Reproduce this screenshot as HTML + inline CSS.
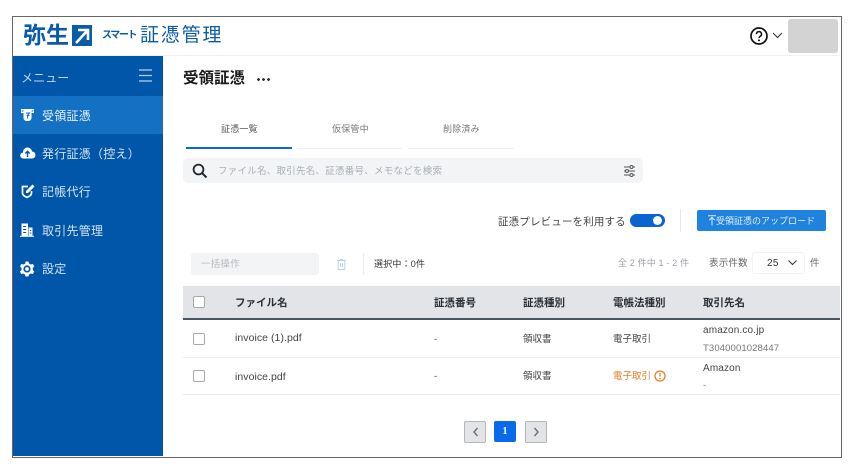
<!DOCTYPE html>
<html lang="ja"><head><meta charset="utf-8"><style>
html,body{margin:0;padding:0;background:#fff}
body{width:850px;height:466px;position:relative;overflow:hidden;font-family:"Liberation Sans","Noto Sans CJK JP",sans-serif;color:#333}
.a,.t{position:absolute}
.t{white-space:nowrap;line-height:16px;height:16px}
.n{color:#d3e2f2;font-size:12px;left:42px;letter-spacing:.25px}
.h{font-size:10.5px;font-weight:700;color:#2a2f36;top:295px}
.c{font-size:9.5px;color:#444}
.l{font-size:10px;color:#444;letter-spacing:.15px}
.cb{position:absolute;left:193px;width:10px;height:10px;border:1px solid #a8a8a8;border-radius:2px;background:#fff}
.pg{position:absolute;top:421px;width:20px;height:20px;border:1px solid #b4b8bd;border-radius:2px;background:#e2e4e7}
svg{position:absolute;overflow:visible}
</style></head><body>
<div class="a" style="left:12px;top:16px;width:828px;height:440px;border:1px solid #666"></div>
<div class="a" style="left:13px;top:17px;width:827px;height:39px;border-bottom:1px solid #f1f1f1;box-sizing:border-box"></div>
<div class="t" style="left:23px;top:22px;font-size:23px;line-height:26px;height:26px;font-weight:700;color:#0a5ba8">弥生</div>
<div class="a" style="left:72px;top:25px;width:20px;height:21px;background:#0a5ba8"></div>
<svg style="left:72px;top:25px" width="20" height="21"><path d="M6 5h10v10M15 6L4 18" fill="none" stroke="#fff" stroke-width="2.6"/></svg>
<div class="t" style="left:102px;top:28px;font-size:10px;color:#0a5ba8;font-weight:700;letter-spacing:-1.400px">スマート</div>
<div class="t" style="left:140px;top:23px;font-size:19px;line-height:26px;height:26px;color:#0a5ba8;letter-spacing:1.800px">証憑管理</div>
<svg style="left:750px;top:27px" width="18" height="18"><circle cx="9" cy="9" r="8" fill="none" stroke="#111" stroke-width="1.700"/><path d="M6.500 7.200a2.500 2.500 0 1 1 3.700 2.100c-.8.500-1.200.9-1.200 1.800" fill="none" stroke="#111" stroke-width="1.500"/><circle cx="9" cy="13.400" r="1" fill="#111"/></svg>
<svg style="left:772px;top:32px" width="11" height="7"><path d="M1 1l4.500 4.500L10 1" fill="none" stroke="#333" stroke-width="1.100"/></svg>
<div class="a" style="left:788px;top:19px;width:50px;height:34px;background:#d3d3d3;border-radius:3px"></div>

<div class="a" style="left:13px;top:56px;width:150px;height:400px;background:#0056a8"></div>
<div class="a" style="left:13px;top:96px;width:150px;height:38px;background:#1470c2"></div>
<div class="t" style="left:21px;top:70px;font-size:12px;color:#c4d8ee;letter-spacing:.1px">メニュー</div>
<svg style="left:139px;top:69px" width="14" height="13"><path d="M0 1h13M0 6.500h13M0 12h13" stroke="#b9d0ea" stroke-width="1.200"/></svg>
<svg style="left:20px;top:108px" width="15" height="14"><path d="M1 1h13v4h-2.500v5a3 3 0 0 1-3 3h-2a3 3 0 0 1-3-3V5H1z" fill="#fff"/><path d="M6 5h3.500L7.500 7.500h2M7.500 7.500v3" stroke="#1470c2" stroke-width="1.100" fill="none"/><path d="M1.500 3h2M11.500 3h2" stroke="#1470c2"/></svg>
<div class="t n" style="top:108px;color:#e6f0fa">受領証憑</div>
<svg style="left:20px;top:145px" width="15" height="14"><path d="M3.500 13.500a3 3 0 0 1-.5-6A4.500 4.500 0 0 1 12 6.500a3.500 3.500 0 0 1 0 7z" fill="#fff"/><path d="M7.500 12V6.500M5.300 8.500l2.200-2.200 2.200 2.200" stroke="#0056a8" stroke-width="1.400" fill="none"/></svg>
<div class="t n" style="top:146px">発行証憑（控え）</div>
<svg style="left:21px;top:184px" width="15" height="14"><path d="M7 2.500H1.500v6.500c0 2.500 3 3.800 4.500 4.300 1.500-.5 4.500-1.800 4.500-4.300V7" fill="none" stroke="#fff" stroke-width="1.700"/><path d="M5 7l6.500-6.500 2 2L7 9H5z" fill="#fff"/></svg>
<div class="t n" style="top:184px">記帳代行</div>
<svg style="left:20px;top:222px" width="14" height="15"><path d="M1.500 14V1.500h6.500V14z M8.500 5.500h4V14h-4z" fill="#fff"/><path d="M3.200 4.500h3M3.200 7.500h3M3.200 10.500h3M9.800 8.500h1.500M9.800 11h1.500" stroke="#0056a8"/><path d="M0 14.300h14" stroke="#fff"/></svg>
<div class="t n" style="top:223px">取引先管理</div>
<svg style="left:20px;top:261px" width="14" height="15"><path d="M5.500 .500h3l.5 2 1.800 1 2-.6 1.500 2.600-1.500 1.400v2.200l1.500 1.400-1.500 2.600-2-.6-1.800 1-.5 2h-3l-.5-2-1.800-1-2 .6L0 10.500l1.500-1.400V6.900L0 5.500l1.500-2.600 2 .6 1.800-1z" fill="#fff"/><circle cx="7" cy="8" r="3.600" fill="#0056a8"/><circle cx="7" cy="8" r="1.900" fill="#fff"/></svg>
<div class="t n" style="top:261px">設定</div>

<div class="t" style="left:183px;top:70px;font-size:15.500px;line-height:18px;height:18px;font-weight:700;color:#1b1b1b">受領証憑</div>
<div class="a" style="left:257px;top:78px;width:14px;height:3px;background:radial-gradient(circle at 1.500px 1.500px,#333 1.300px,transparent 1.500px) 0 0/5px 3px"></div>

<div class="t" style="left:221px;top:121px;font-size:9px;color:#555;letter-spacing:.2px">証憑一覧</div>
<div class="t" style="left:332px;top:121px;font-size:9px;color:#777;letter-spacing:.2px">仮保管中</div>
<div class="t" style="left:443px;top:121px;font-size:9px;color:#777;letter-spacing:.2px">削除済み</div>
<div class="a" style="left:186px;top:147px;width:106px;height:2px;background:#0a6bd8"></div>
<div class="a" style="left:297px;top:148px;width:105px;height:1px;background:#f0f1f3"></div>
<div class="a" style="left:408px;top:148px;width:106px;height:1px;background:#f0f1f3"></div>

<div class="a" style="left:183px;top:158px;width:460px;height:25px;background:#f3f4f6;border-radius:5px"></div>
<svg style="left:192px;top:163px" width="16" height="16"><circle cx="6.500" cy="6.500" r="4.900" fill="none" stroke="#1c2733" stroke-width="1.800"/><path d="M10.200 10.200L14.500 14.500" stroke="#1c2733" stroke-width="2"/></svg>
<div class="t" style="left:218px;top:164px;font-size:9.500px;color:#a9afb7;letter-spacing:.25px">ファイル名、取引先名、証憑番号、メモなどを検索</div>
<svg style="left:624px;top:165px" width="11" height="12"><path d="M0 2h11M0 6h11M0 10h11" stroke="#555"/><circle cx="7.500" cy="2" r="1.500" fill="#f3f4f6" stroke="#555"/><circle cx="3" cy="6" r="1.500" fill="#f3f4f6" stroke="#555"/><circle cx="7.500" cy="10" r="1.500" fill="#f3f4f6" stroke="#555"/></svg>

<div class="t" style="left:498px;top:214px;font-size:10.500px;color:#444;letter-spacing:.15px">証憑プレビューを利用する</div>
<div class="a" style="left:630px;top:214px;width:35px;height:13px;background:#0a64cf;border-radius:7px"></div>
<div class="a" style="left:653px;top:216px;width:9px;height:9px;background:#fff;border-radius:50%"></div>
<div class="a" style="left:680px;top:209px;width:1px;height:23px;background:#e8e9eb"></div>
<div class="a" style="left:697px;top:210px;width:129px;height:21px;background:#1e82de;border-radius:2px"></div>
<svg style="left:708px;top:215px" width="8" height="11"><path d="M0 .700h8M4 10.500V2.500M1.200 5.200L4 2.400l2.800 2.800" fill="none" stroke="#dcecfb"/></svg>
<div class="t" style="left:716px;top:213px;font-size:9px;color:#e6f1fc">受領証憑のアップロード</div>

<div class="a" style="left:191px;top:253px;width:128px;height:22px;background:#f3f4f5;border-radius:3px"></div>
<div class="t" style="left:201px;top:257px;font-size:9.500px;color:#b4b8bd;letter-spacing:.2px">一括操作</div>
<svg style="left:337px;top:259px" width="9" height="11"><path d="M0 1.500h9M1.200 1.500v9h6.600v-9M3.500 4v4M5.500 4v4M3 .500h3" fill="none" stroke="#b8d2e8"/></svg>
<div class="a" style="left:363px;top:253px;width:1px;height:22px;background:#eceded"></div>
<div class="t" style="left:374px;top:256px;font-size:9px;color:#333;letter-spacing:.2px">選択中：0件</div>
<div class="t" style="left:618px;top:255px;font-size:9px;color:#9a9fa5;letter-spacing:.15px">全 2 件中 1 - 2 件</div>
<div class="t" style="left:709px;top:256px;font-size:9.500px;color:#666;letter-spacing:.2px">表示件数</div>
<div class="a" style="left:752px;top:252px;width:53px;height:22px;border:1px solid #f3f3f3;border-radius:3px;box-sizing:border-box"></div>
<div class="t" style="left:767px;top:256px;font-size:10px;color:#333;letter-spacing:.3px">25</div>
<svg style="left:788px;top:260px" width="9" height="6"><path d="M.500 .500l4 4 4-4" fill="none" stroke="#333"/></svg>
<div class="t" style="left:810px;top:256px;font-size:9.500px;color:#666">件</div>

<div class="a" style="left:183px;top:286px;width:657px;height:33px;background:#e2e4e7"></div>
<div class="a" style="left:183px;top:318px;width:657px;height:2px;background:#4b5563"></div>
<div class="cb" style="top:296px"></div>
<div class="t h" style="left:235px">ファイル名</div>
<div class="t h" style="left:434px">証憑番号</div>
<div class="t h" style="left:523px">証憑種別</div>
<div class="t h" style="left:613px">電帳法種別</div>
<div class="t h" style="left:703px">取引先名</div>

<div class="cb" style="top:333px"></div>
<div class="t l" style="left:235px;top:330px;font-size:10.500px;letter-spacing:.05px">invoice (1).pdf</div>
<div class="t c" style="left:434px;top:332px">-</div>
<div class="t c" style="left:523px;top:332px">領収書</div>
<div class="t c" style="left:613px;top:332px">電子取引</div>
<div class="t l" style="left:703px;top:323px">amazon.co.jp</div>
<div class="t l" style="left:703px;top:341px;font-size:9.500px;color:#777;letter-spacing:.12px">T3040001028447</div>
<div class="a" style="left:183px;top:357px;width:657px;height:1px;background:#edeef0"></div>

<div class="cb" style="top:370px"></div>
<div class="t l" style="left:235px;top:369px;font-size:10.500px;letter-spacing:.05px">invoice.pdf</div>
<div class="t c" style="left:434px;top:369px">-</div>
<div class="t c" style="left:523px;top:369px">領収書</div>
<div class="t c" style="left:613px;top:369px;color:#e67e22">電子取引</div>
<svg style="left:654px;top:370px" width="12" height="12"><circle cx="6" cy="6" r="5" fill="none" stroke="#e67e22" stroke-width="1.300"/><path d="M6 3v3.500" stroke="#e67e22" stroke-width="1.300"/><circle cx="6" cy="8.600" r=".8" fill="#e67e22"/></svg>
<div class="t l" style="left:703px;top:361px">Amazon</div>
<div class="t c" style="left:703px;top:378px;color:#777">-</div>
<div class="a" style="left:183px;top:394px;width:657px;height:1px;background:#e8e9eb"></div>

<div class="pg" style="left:464px"></div>
<svg style="left:473px;top:427px" width="6" height="10"><path d="M4.500 1L1 5l3.500 4" fill="none" stroke="#6b7076" stroke-width="1.400"/></svg>
<div class="a" style="left:494px;top:421px;width:22px;height:21px;background:#0a6bea;border-radius:2px"></div>
<div class="t" style="left:494px;top:424px;width:22px;text-align:center;font-size:10px;font-weight:700;color:#fff;font-family:'Liberation Serif',serif">1</div>
<div class="pg" style="left:525px"></div>
<svg style="left:533px;top:427px" width="6" height="10"><path d="M1.500 1L5 5 1.500 9" fill="none" stroke="#6b7076" stroke-width="1.400"/></svg>
</body></html>
